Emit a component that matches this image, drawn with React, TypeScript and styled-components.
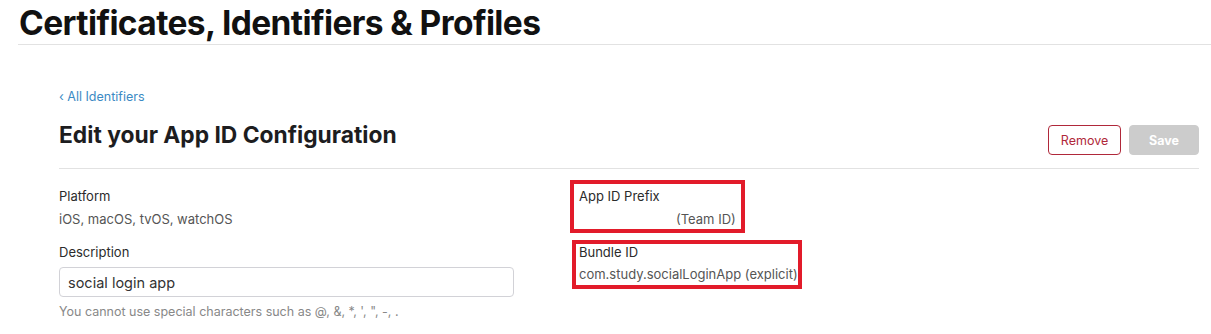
import styled, { createGlobalStyle } from 'styled-components'

const GlobalStyle = createGlobalStyle`
  body {
    margin: 0;
    background: #fff;
    font-family: Inter, "Noto Sans", "Liberation Sans", sans-serif;
    color: #333;
  }
`

const Header = styled.header`
  padding: 3px 0 0 18px;
`

const PageTitle = styled.h1`
  margin: 0;
  padding-left: 1px;
  font-size: 33.5px;
  line-height: 40px;
  font-weight: 700;
  letter-spacing: -0.6px;
  color: #111;
  border-bottom: 1px solid #e2e2e2;
  height: 41px;
`

const Main = styled.main`
  padding: 40px 12px 0 59px;
`

const BackLink = styled.a`
  display: inline-block;
  font-size: 12.5px;
  line-height: 18px;
  color: #3b8ac4;
  text-decoration: none;
`

const TopRow = styled.div`
  display: flex;
  align-items: center;
  justify-content: space-between;
  margin-top: 19px;
  padding-bottom: 13px;
  border-bottom: 1px solid #e2e2e2;
`

const Title = styled.h2`
  margin: 0;
  margin-top: -10px;
  font-size: 22.8px;
  line-height: 30px;
  font-weight: 700;
  color: #1d1d1f;
`

const Actions = styled.div`
  display: flex;
  gap: 8px;
`

const Button = styled.button<{ $variant: 'outline' | 'disabled' }>`
  height: 30px;
  padding: 0 11px;
  border-radius: 4px;
  font-family: inherit;
  font-size: 12.5px;
  font-weight: ${(p) => (p.$variant === 'disabled' ? 700 : 400)};
  border: 1px solid ${(p) => (p.$variant === 'outline' ? '#b0283a' : '#cccccc')};
  background: ${(p) => (p.$variant === 'outline' ? '#fff' : '#cccccc')};
  color: ${(p) => (p.$variant === 'outline' ? '#b0283a' : '#fff')};
  min-width: ${(p) => (p.$variant === 'outline' ? '73px' : '70px')};
`

const Columns = styled.div`
  display: grid;
  grid-template-columns: 520px 1fr;
  padding-top: 18px;
`

const Column = styled.div`
  display: flex;
  flex-direction: column;
  gap: 15px;
`

const Field = styled.div<{ $gap?: number }>`
  position: relative;
  display: flex;
  flex-direction: column;
  gap: ${(p) => p.$gap ?? 5}px;
`

const Label = styled.div`
  font-size: 13px;
  line-height: 18px;
  font-weight: 400;
  color: #2b2b2b;
`

const Value = styled.div<{ $indent?: number }>`
  font-size: 13px;
  line-height: 18px;
  color: #555;
  padding-left: ${(p) => p.$indent ?? 0}px;
`

const Input = styled.input`
  box-sizing: border-box;
  width: 455px;
  height: 30px;
  padding: 0 8px;
  border: 1px solid #d2d2d7;
  border-radius: 4px;
  font-family: inherit;
  font-size: 14.5px;
  color: #333;
  outline: none;
`

const Hint = styled.div`
  font-size: 12.5px;
  line-height: 18px;
  color: #888;
`

const Highlight = styled.div<{ $w: number; $top: number; $left: number; $h: number }>`
  position: absolute;
  top: ${(p) => p.$top}px;
  left: ${(p) => p.$left}px;
  width: ${(p) => p.$w}px;
  height: ${(p) => p.$h}px;
  box-sizing: border-box;
  border: 4px solid #e21b2a;
  pointer-events: none;
`

export default function App() {
  return (
    <>
      <GlobalStyle />
      <Header>
        <PageTitle>Certificates, Identifiers &amp; Profiles</PageTitle>
      </Header>
      <Main>
        <BackLink href="#">‹ All Identifiers</BackLink>
        <TopRow>
          <Title>Edit your App ID Configuration</Title>
          <Actions>
            <Button $variant="outline">Remove</Button>
            <Button $variant="disabled" disabled>
              Save
            </Button>
          </Actions>
        </TopRow>
        <Columns>
          <Column>
            <Field>
              <Label>Platform</Label>
              <Value>iOS, macOS, tvOS, watchOS</Value>
            </Field>
            <Field $gap={6}>
              <Label>Description</Label>
              <Input defaultValue="social login app" />
              <Hint>You cannot use special characters such as @, &amp;, *, ', ", -, .</Hint>
            </Field>
          </Column>
          <Column>
            <Field>
              <Label>App ID Prefix</Label>
              {/* team id itself is blanked out in the screenshot */}
              <Value $indent={97}>(Team ID)</Value>
              <Highlight $top={-7} $left={-9} $w={175} $h={53} />
            </Field>
            <Field $gap={4}>
              <Label>Bundle ID</Label>
              <Value>com.study.socialLoginApp (explicit)</Value>
              <Highlight $top={-3} $left={-7} $w={230} $h={49} />
            </Field>
          </Column>
        </Columns>
      </Main>
    </>
  )
}
